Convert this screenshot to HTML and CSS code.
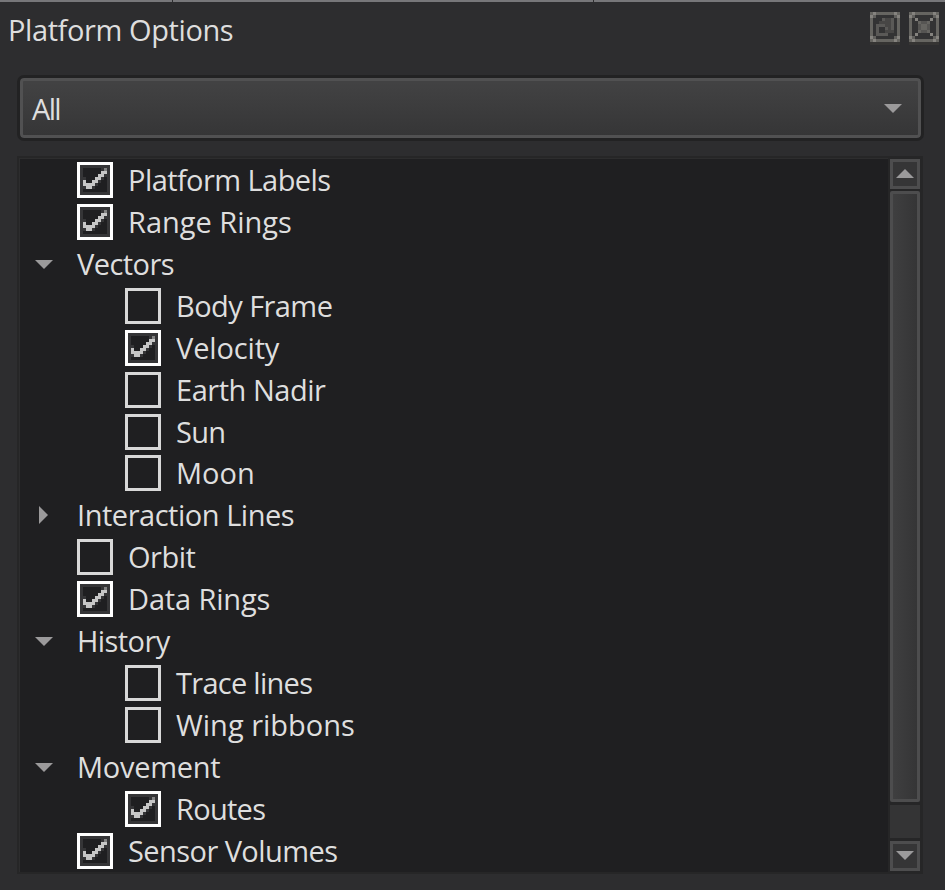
FILE: index.html
```
<!DOCTYPE html>
<html lang="en"><head><meta charset="utf-8"><title>Platform Options</title><link rel="stylesheet" href="styles.css"></head>
<body>
<svg class="defs" aria-hidden="true">
<symbol id="check" viewBox="0 0 12 12"><path fill="#353537" d="M1 1h10v10H1z"/><path fill="#1f1f21" d="M2 2h8v8H2z"/><path fill="#353537" d="M1 5h1v1H1zM2 5h1v1H2zM2 8h1v1H2zM5 8h1v1H5zM6 7h1v1H6zM7 6h1v1H7zM8 5h1v1H8zM9 4h1v1H9zM8 2h1v1H8z"/><path fill="#c6c6c6" d="M2 6h1v1H2zM2 7h2v1H2zM3 8h2v1H3zM4 7h2v1H4zM5 6h2v1H5zM6 5h2v1H6zM7 4h2v1H7zM8 3h2v1H8z"/><path fill="#838383" d="M9 2h1v1H9z"/></symbol>
<symbol id="frame" viewBox="0 0 10 11"><path fill="#353433" d="M0 10h10v1H0z"/><path fill="#666561" d="M0 0h10v10H0z"/><path fill="#333334" d="M1 1h8v8H1z"/><path fill="#85837f" d="M1 0h1v1H1zM0 1h1v1H0zM8 0h1v1H8zM9 1h1v1H9zM0 8h1v1H0zM1 9h1v1H1zM9 8h1v1H9zM8 9h1v1H8z"/><path fill="#62615e" d="M1 1h1v1H1zM8 1h1v1H8zM1 8h1v1H1zM8 8h1v1H8z"/></symbol>
</svg>
<div class="topline"><i></i><i></i><i></i></div>
<header class="title"><h1>Platform Options</h1>
<div class="actions">
<button aria-label="Float"><svg viewBox="0 0 10 11"><use href="#frame"/><path fill="#5a5957" d="M4 2h1v1H4zM7 2h1v1H7zM7 3h1v3H7zM2 4h1v1H2zM3 4h2v1H3zM2 5h1v2H2zM2 7h4v1H2zM5 5h1v1H5z"/><path fill="#474645" d="M5 2h2v1H5zM3 3h4v1H3zM5 4h2v1H5zM6 5h1v2H6zM5 6h1v1H5zM7 6h1v1H7z"/></svg></button>
<button aria-label="Close"><svg viewBox="0 0 10 11"><use href="#frame"/><path fill="#85837f" d="M2 2h1v1H2zM7 2h1v1H7zM2 7h1v1H2zM7 7h1v1H7z"/><path fill="#666561" d="M3 3h1v1H3zM6 3h1v1H6zM4 4h2v2H4zM3 6h1v1H3zM6 6h1v1H6z"/><path fill="#565553" d="M4 3h2v1H4zM3 4h1v2H3zM6 4h1v2H6zM4 6h2v1H4z"/></svg></button>
</div></header>
<div class="combo"><span>All</span><b class="down"></b></div>
<main class="panel">
<ul class="tree">
<li><svg class="box on"><use href="#check"/></svg><span class="t5">Platform Labels</span></li>
<li><svg class="box on"><use href="#check"/></svg><span>Range Rings</span></li>
<li class="group"><b class="down"></b><span class="t5">Vectors</span></li>
<li class="sub"><i class="box"></i><span class="t5">Body Frame</span></li>
<li class="sub"><svg class="box on"><use href="#check"/></svg><span class="t2">Velocity</span></li>
<li class="sub"><i class="box"></i><span class="t4">Earth Nadir</span></li>
<li class="sub short"><i class="box"></i><span class="t7">Sun</span></li>
<li class="sub"><i class="box"></i><span>Moon</span></li>
<li class="group"><b class="right"></b><span class="t4">Interaction Lines</span></li>
<li><i class="box"></i><span class="t4">Orbit</span></li>
<li><svg class="box on"><use href="#check"/></svg><span class="t2">Data Rings</span></li>
<li class="group"><b class="down"></b><span class="t5">History</span></li>
<li class="sub"><i class="box"></i><span class="t7">Trace lines</span></li>
<li class="sub"><i class="box"></i><span>Wing ribbons</span></li>
<li class="group"><b class="down"></b><span class="t3">Movement</span></li>
<li class="sub"><svg class="box on"><use href="#check"/></svg><span class="t7">Routes</span></li>
<li><svg class="box on"><use href="#check"/></svg><span class="t5">Sensor Volumes</span></li>
</ul>
<div class="scroll"><div class="arrow"><b class="up"></b></div><div class="thumb"></div><div class="track"></div><div class="arrow"><b class="down"></b></div></div>
</main>
</body></html>
```
FILE: styles.css
```
*{box-sizing:border-box}
body{margin:0;width:945px;height:890px;overflow:hidden;background:#2d2d2f;color:#dedede;font:29px/42px "Open Sans","Noto Sans",sans-serif}
.defs{display:none}
.topline{display:grid;grid-template-columns:172px 420px 1fr;gap:1px;height:2px}
.topline i{background:#77777a}
.title{display:flex;justify-content:space-between;height:73px;padding:7px 6px 0 8px}
h1{margin:0;font:inherit;letter-spacing:-.4px}
.actions{display:flex;gap:9px;margin-top:3px}
button{display:block;padding:0;border:0;background:none;width:30px;height:33px}
button svg{display:block;width:30px;height:33px;shape-rendering:crispEdges}
.combo{margin:0 21px 0 17px;height:66px;border:3px solid #222223;border-radius:7px;background:linear-gradient(#434344,#353536);box-shadow:inset 0 0 0 3px #515152;display:flex;align-items:center;justify-content:space-between;padding:0 19px 0 12px;letter-spacing:-1.7px}
.combo span{padding-top:2px}
.down,.up{width:0;height:0;border:9px solid transparent}
.down{border-top-color:#9b9a9b;border-bottom:0}
.up{border-bottom-color:#9b9a9b;border-top:0}
.right{width:0;height:0;border:9px solid transparent;border-left-color:#9b9a9b;border-right:0}
.panel{margin:15px 22px 0 17px;height:718px;border:2px solid #262627;background:#1f1f21;box-shadow:inset 1px 1px #2d2d2e;display:flex;justify-content:space-between}
.tree{list-style:none;margin:1px 0 0;padding:0;flex:1;overflow:hidden}
.tree li{height:42px;display:flex;align-items:center;padding-left:58px;white-space:pre}
.tree li.sub{padding-left:106px}
.tree li.short{margin-bottom:-1px}
.tree li.group{padding-left:16px}
.group b{margin-right:24px}
.group .right{margin-left:4px;margin-right:29px;margin-top:-1px}
.t2{letter-spacing:-.15px}
.t3{letter-spacing:-.27px}
.t4{letter-spacing:-.47px}
.t5{letter-spacing:-.57px}
.t7{letter-spacing:-.72px}
.box{width:36px;height:36px;border:3px solid #d8d8d8;margin-right:15px;flex:none}
.box.on{border:0;background:#fff;shape-rendering:crispEdges}
.scroll{width:33px;padding:1px 1px 1px 2px;display:flex;flex-direction:column;background:#262627}
.arrow{height:30px;border:3px solid #4d4d4e;background:#353536;display:grid;place-items:center}
.arrow b{margin-top:-2px}
.thumb{height:611px;margin:2px 0 3px;border:3px solid #4d4d4e;border-radius:2px;background:linear-gradient(90deg,#3f3f40,#353536)}
.track{flex:1;background:#343435;margin-bottom:3px}
```
